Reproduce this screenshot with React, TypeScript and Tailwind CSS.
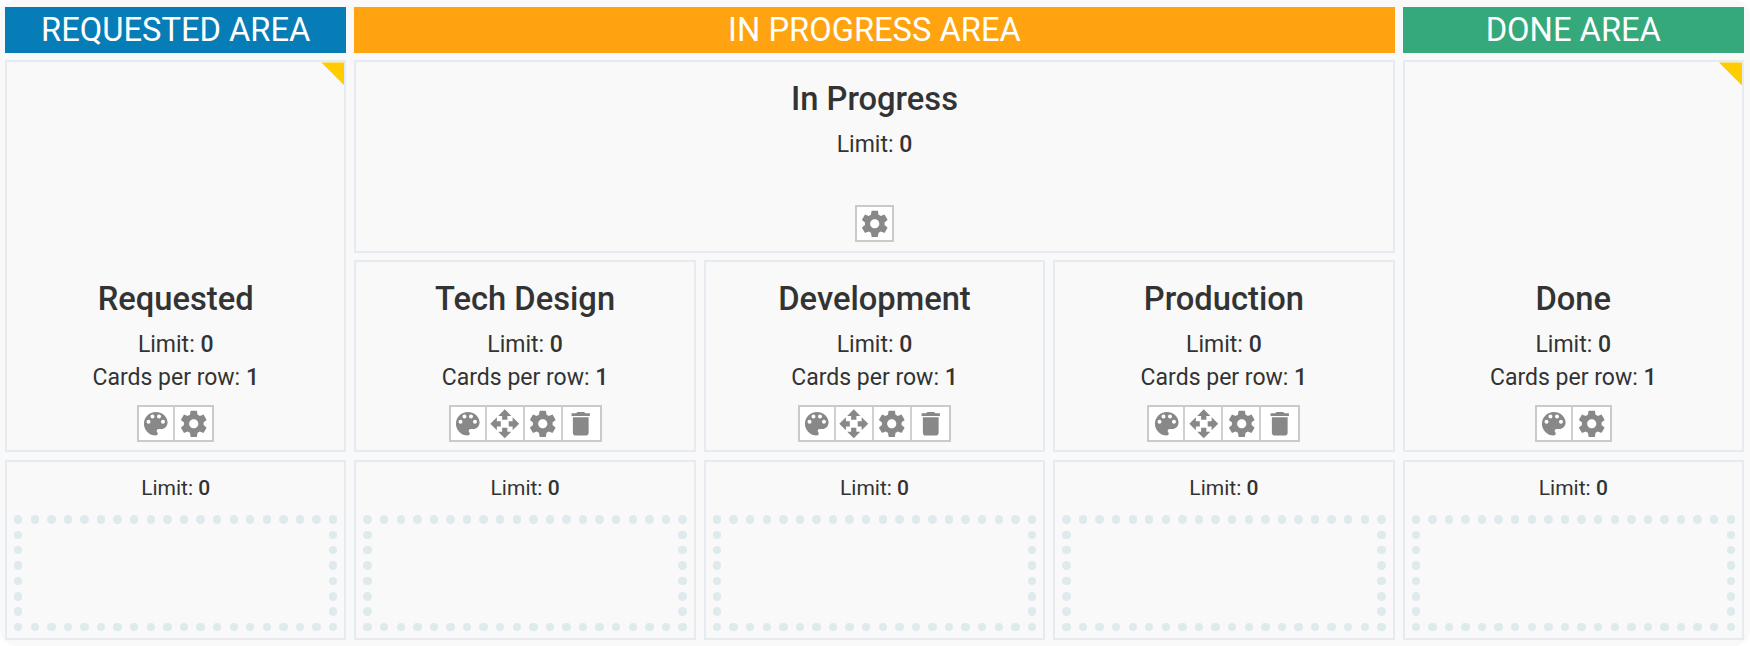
import * as React from "react"
import { MdDelete, MdOpenWith } from "react-icons/md"

type Action = "color" | "move" | "settings" | "delete"

interface Column {
    name: string
    limit: number
    cardsPerRow?: number
    actions: Action[]
}

const requested: Column = { name: "Requested", limit: 0, cardsPerRow: 1, actions: ["color", "settings"] }
const inProgress: Column = { name: "In Progress", limit: 0, actions: ["settings"] }
const done: Column = { name: "Done", limit: 0, cardsPerRow: 1, actions: ["color", "settings"] }

const subColumns: Column[] = ["Tech Design", "Development", "Production"].map((name) => ({
    name,
    limit: 0,
    cardsPerRow: 1,
    actions: ["color", "move", "settings", "delete"],
}))

function PaletteIcon({ className }: { className?: string }) {
    return (
        <svg viewBox="0 0 24 24" fill="currentColor" className={className}>
            <path d="M12 3c-4.97 0-9 4.03-9 9s4.03 9 9 9c.83 0 1.5-.67 1.5-1.5 0-.39-.15-.74-.39-1.01-.23-.26-.38-.61-.38-.99 0-.83.67-1.5 1.5-1.5H16c2.76 0 5-2.24 5-5 0-4.42-4.03-8-9-8zm-5.5 9c-.83 0-1.5-.67-1.5-1.5S5.67 9 6.5 9 8 9.67 8 10.5 7.33 12 6.5 12zm3-4C8.67 8 8 7.33 8 6.5S8.67 5 9.5 5s1.5.67 1.5 1.5S10.33 8 9.5 8zm5 0c-.83 0-1.5-.67-1.5-1.5S13.67 5 14.5 5s1.5.67 1.5 1.5S15.33 8 14.5 8zm3 4c-.83 0-1.5-.67-1.5-1.5S16.67 9 17.5 9s1.5.67 1.5 1.5-.67 1.5-1.5 1.5z" />
        </svg>
    )
}

function GearIcon({ className }: { className?: string }) {
    return (
        <svg viewBox="0 0 24 24" fill="currentColor" className={className}>
            <path d="M19.43 12.98c.04-.32.07-.64.07-.98s-.03-.66-.07-.98l2.11-1.65c.19-.15.24-.42.12-.64l-2-3.46c-.12-.22-.39-.3-.61-.22l-2.49 1c-.52-.4-1.08-.73-1.69-.98l-.38-2.65C14.46 2.18 14.25 2 14 2h-4c-.25 0-.46.18-.49.42l-.38 2.65c-.61.25-1.17.59-1.69.98l-2.49-1c-.23-.09-.49 0-.61.22l-2 3.46c-.13.22-.07.49.12.64l2.11 1.65c-.04.32-.07.65-.07.98s.03.66.07.98l-2.11 1.65c-.19.15-.24.42-.12.64l2 3.46c.12.22.39.3.61.22l2.49-1c.52.4 1.08.73 1.69.98l.38 2.65c.03.24.24.42.49.42h4c.25 0 .46-.18.49-.42l.38-2.65c.61-.25 1.17-.59 1.69-.98l2.49 1c.23.09.49 0 .61-.22l2-3.46c.12-.22.07-.49-.12-.64l-2.11-1.65zM12 15.5c-1.93 0-3.5-1.57-3.5-3.5s1.57-3.5 3.5-3.5 3.5 1.57 3.5 3.5-1.57 3.5-3.5 3.5z" />
        </svg>
    )
}

const actionIcons = {
    color: PaletteIcon,
    move: MdOpenWith,
    settings: GearIcon,
    delete: MdDelete,
}

function ActionBar({ actions }: { actions: Action[] }) {
    return (
        <div className="flex divide-x-2 divide-[#d0d0d0] border-2 border-[#cacaca] bg-white">
            {actions.map((action) => {
                const Icon = actionIcons[action]
                return (
                    <button
                        key={action}
                        aria-label={action}
                        className="flex h-[33px] w-[38px] items-center justify-center text-[#888] first:w-[36px] last:w-[37px] only:w-[35px]"
                    >
                        <Icon className="size-[31.5px] shrink-0" />
                    </button>
                )
            })}
        </div>
    )
}

function ColumnPanel({ column, corner, className = "pb-2" }: { column: Column; corner?: boolean; className?: string }) {
    return (
        <div className={`relative flex h-full flex-col items-center justify-end border-2 border-[#e6eaf1] ${className}`}>
            {corner && (
                <div className="absolute top-0 right-0 size-[23px] bg-[#ffcc00] [clip-path:polygon(0_0,100%_0,100%_100%)]" />
            )}
            <h2 className="text-[32.7px] leading-[38px] font-medium">{column.name}</h2>
            <p className="mt-[10px] text-[23px] leading-[33px]">
                Limit: <b className="font-medium">{column.limit}</b>
            </p>
            <p className="mb-[11px] h-[33px] text-[23px] leading-[33px]">
                {column.cardsPerRow && (
                    <>
                        Cards per row: <b className="font-medium">{column.cardsPerRow}</b>
                    </>
                )}
            </p>
            <ActionBar actions={column.actions} />
        </div>
    )
}

function Dots({ count, className }: { count: number; className?: string }) {
    return (
        <div className={`flex justify-between ${className ?? ""}`}>
            {Array.from({ length: count }, (_, i) => (
                <span key={i} className="size-[8.4px] rounded-full bg-[#dfeaed]" />
            ))}
        </div>
    )
}

function Lane({ limit }: { limit: number }) {
    return (
        <div className="flex flex-col items-center border-2 border-[#e6eaf1] px-[7px] pt-[10px] pb-[6.5px]">
            <p className="text-[21px] leading-[32px]">
                Limit: <b className="font-medium">{limit}</b>
            </p>
            {/* Dotted drop zone */}
            <div className="mt-auto flex h-[116px] w-full flex-col">
                <Dots count={20} />
                <div className="flex flex-1 justify-between py-[7px]">
                    <Dots count={6} className="flex-col" />
                    <Dots count={6} className="flex-col" />
                </div>
                <Dots count={20} />
            </div>
        </div>
    )
}

function AreaHeader({ className, children }: { className: string; children: React.ReactNode }) {
    return (
        <div className={`flex items-center justify-center text-[32.7px] leading-none text-white ${className}`}>
            {children}
        </div>
    )
}

export default function App() {
    return (
        <div className="h-[646px] w-[1750px] bg-white font-['Roboto',sans-serif] text-[#333]">
            <div className="grid h-[646px] grid-cols-5 grid-rows-[45.9px_192.4px_192px_180px] gap-x-2 gap-y-[7.5px] rounded-2xl bg-[#f9f9f9] pt-[7px] pr-[6px] pl-[5px]">
                <AreaHeader className="bg-[#077db7]">REQUESTED AREA</AreaHeader>
                <AreaHeader className="col-span-3 bg-[#ffa311]">IN PROGRESS AREA</AreaHeader>
                <AreaHeader className="bg-[#35a97c]">DONE AREA</AreaHeader>

                <div className="row-span-2">
                    <ColumnPanel column={requested} corner />
                </div>
                <div className="col-span-3">
                    <ColumnPanel column={inProgress} className="pb-[9px]" />
                </div>
                <div className="row-span-2">
                    <ColumnPanel column={done} corner />
                </div>
                {subColumns.map((column) => (
                    <ColumnPanel key={column.name} column={column} />
                ))}

                {[requested, ...subColumns, done].map((column) => (
                    <Lane key={column.name} limit={0} />
                ))}
            </div>
        </div>
    )
}
